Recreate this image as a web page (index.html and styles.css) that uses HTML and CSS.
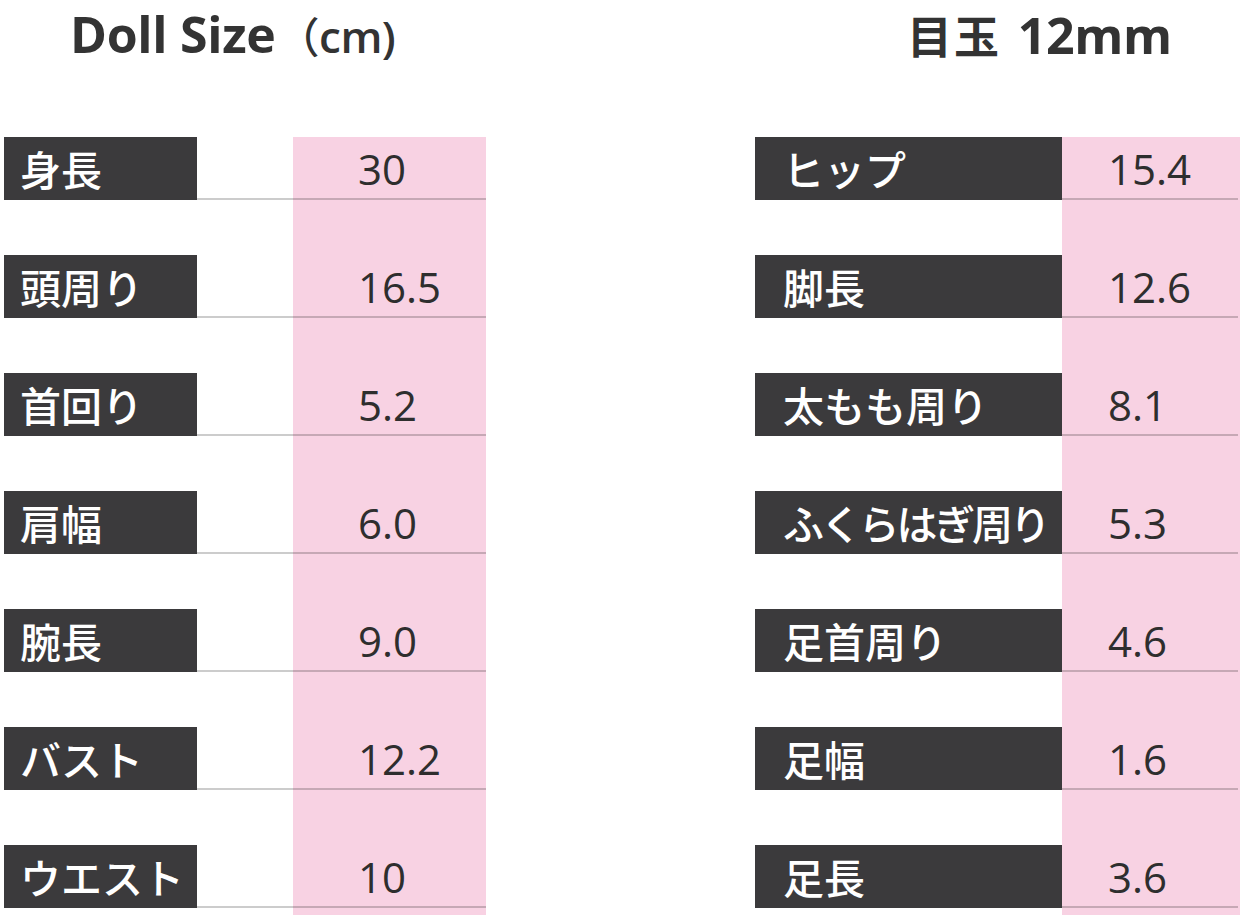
FILE: index.html
```html
<!DOCTYPE html>
<html lang="ja">
<head>
<meta charset="utf-8">
<title>Doll Size</title>
<link rel="stylesheet" href="styles.css">
</head>
<body>
<div class="page">
  <section class="col col-left">
    <h1 class="title">Doll Size<span class="unit"><span class="paren">（</span>cm)</span></h1>
    <div class="table">
      <div class="row"><div class="label">身長</div><div class="rest"><span class="val">30</span></div></div>
      <div class="row"><div class="label">頭周り</div><div class="rest"><span class="val">16.5</span></div></div>
      <div class="row"><div class="label">首回り</div><div class="rest"><span class="val">5.2</span></div></div>
      <div class="row"><div class="label">肩幅</div><div class="rest"><span class="val">6.0</span></div></div>
      <div class="row"><div class="label">腕長</div><div class="rest"><span class="val">9.0</span></div></div>
      <div class="row"><div class="label">バスト</div><div class="rest"><span class="val">12.2</span></div></div>
      <div class="row"><div class="label">ウエスト</div><div class="rest"><span class="val">10</span></div></div>
    </div>
  </section>
  <section class="col col-right">
    <h1 class="title"><span class="cjk">目玉</span> 12mm</h1>
    <div class="table">
      <div class="row"><div class="label">ヒップ</div><div class="rest"><span class="val">15.4</span></div></div>
      <div class="row"><div class="label">脚長</div><div class="rest"><span class="val">12.6</span></div></div>
      <div class="row"><div class="label">太もも周り</div><div class="rest"><span class="val">8.1</span></div></div>
      <div class="row"><div class="label tight">ふくらはぎ周り</div><div class="rest"><span class="val">5.3</span></div></div>
      <div class="row"><div class="label">足首周り</div><div class="rest"><span class="val">4.6</span></div></div>
      <div class="row"><div class="label">足幅</div><div class="rest"><span class="val">1.6</span></div></div>
      <div class="row"><div class="label">足長</div><div class="rest"><span class="val">3.6</span></div></div>
    </div>
  </section>
</div>
</body>
</html>
```

FILE: styles.css
```css
* { box-sizing: border-box; }
html, body {
  margin: 0;
  padding: 0;
  background: #ffffff;
}
body {
  width: 1242px;
  height: 915px;
  overflow: hidden;
  font-family: "Open Sans", "Noto Sans CJK JP", sans-serif;
}
.page {
  display: flex;
  align-items: flex-start;
}
.col-left {
  width: 482px;
  margin-left: 4px;
}
.col-right {
  width: 485px;
  margin-left: 269px;
}
.title {
  margin: 0;
  height: 137px;
  font-size: 50px;
  line-height: 69px;
  font-weight: 700;
  color: #333333;
  letter-spacing: -0.3px;
  white-space: nowrap;
}
.title .unit {
  font-size: 44px;
  font-weight: 600;
  letter-spacing: -0.5px;
}
.title .paren {
  font-family: "Noto Sans CJK JP", sans-serif;
  font-weight: 500;
  font-size: 42px;
  margin-left: 2px;
}
.title .cjk {
  font-family: "Noto Sans CJK JP", sans-serif;
  font-size: 45px;
  letter-spacing: 2px;
  margin-right: 4px;
}
.col-left .title { padding-left: 66px; }
.col-right .title { padding-left: 152px; }

.table {
  display: flex;
  flex-direction: column;
  gap: 55px;
  padding-bottom: 7px;
  background-repeat: no-repeat;
  background-image: linear-gradient(#f8d2e3, #f8d2e3);
}
.col-left .table {
  background-position: 289px 0;
  background-size: 193px 100%;
}
.col-right .table {
  background-position: 307px 0;
  background-size: 178px 100%;
}
.row {
  display: flex;
  height: 63px;
}
.label {
  display: flex;
  align-items: center;
  height: 63px;
  background: #3b3a3c;
  color: #ffffff;
  font-family: "Noto Sans CJK JP", sans-serif;
  font-weight: 500;
  font-size: 41px;
  line-height: 1;
  white-space: nowrap;
}
.col-left .label {
  width: 193px;
  padding-left: 16px;
}
.col-right .label {
  width: 307px;
  padding-left: 28px;
}
.label.tight { letter-spacing: -3.2px; }
.rest {
  flex: 1;
  display: flex;
  align-items: center;
  border-bottom: 2px solid rgba(0, 0, 0, 0.2);
}
.col-left .rest { padding-left: 161px; }
.col-right .rest { padding-left: 46px; margin-right: 2px; }
.val {
  font-family: "Open Sans", sans-serif;
  font-size: 42px;
  font-weight: 500;
  color: #2e2e2e;
  line-height: 1;
  padding-top: 2px;
}
```
